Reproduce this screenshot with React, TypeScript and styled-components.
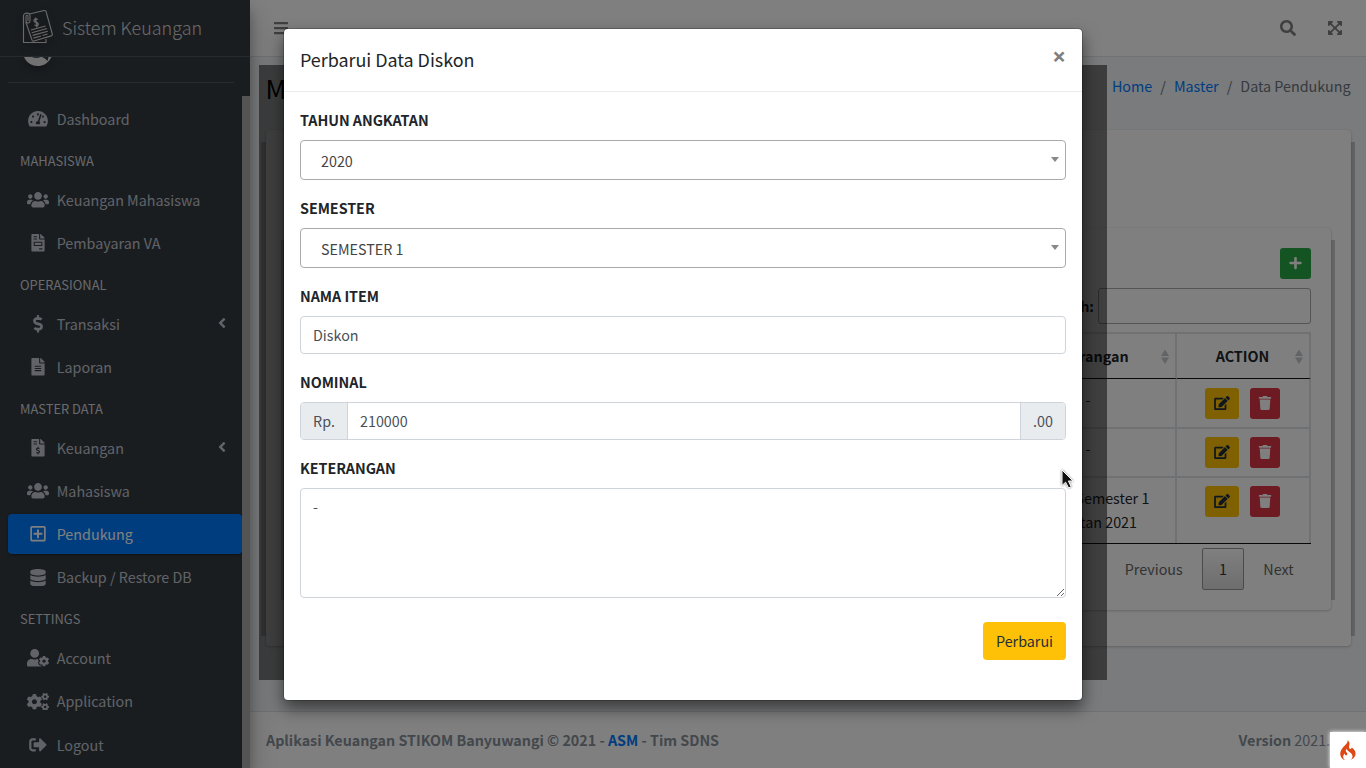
import React from "react";
import styled, { createGlobalStyle, css } from "styled-components";
import {
  FaAngleLeft,
  FaBars,
  FaCogs,
  FaDatabase,
  FaDollarSign,
  FaEdit,
  FaExpandArrowsAlt,
  FaFileAlt,
  FaFileInvoice,
  FaFileInvoiceDollar,
  FaPlus,
  FaRegPlusSquare,
  FaSearch,
  FaSignOutAlt,
  FaTachometerAlt,
  FaTrash,
  FaUserCog,
  FaUsers,
} from "react-icons/fa";
import type { IconType } from "react-icons";

/* The face is drawn larger than its nominal size, so sizes are scaled down. */
const fs = (px: number) => `${(px * 0.8955).toFixed(2)}px`;
const fontStack = `"Source Sans Pro", "Noto Sans CJK SC", "Noto Sans", sans-serif`;

const GlobalStyle = createGlobalStyle`
  *, *::before, *::after { box-sizing: border-box; }
  html, body { margin: 0; height: 100%; overflow: hidden; }
  body {
    font-family: ${fontStack};
    font-size: ${fs(16)};
    line-height: 24px;
    color: #212529;
    background: #f4f6f9;
  }
  button, input, textarea { font: inherit; margin: 0; }
`;

const Page = styled.div`
  position: relative;
  display: flex;
  width: 1366px;
  height: 768px;
  overflow: hidden;
`;

/* ---------- Sidebar ---------- */

const Sidebar = styled.aside`
  position: relative;
  z-index: 2;
  display: flex;
  flex-direction: column;
  flex: 0 0 250px;
  height: 768px;
  background: #343a40;
  box-shadow: 0 14px 28px rgba(0, 0, 0, 0.25), 0 10px 10px rgba(0, 0, 0, 0.22);
`;

const Brand = styled.div`
  display: flex;
  align-items: center;
  flex: 0 0 57px;
  padding: 0 0 3px 21px;
  border-bottom: 1px solid #4b545c;
  color: rgba(255, 255, 255, 0.8);
  font-size: ${fs(20)};
  font-weight: 300;
  svg {
    margin: 0 8px 0 0;
    opacity: 0.9;
    filter: drop-shadow(0 3px 4px rgba(0, 0, 0, 0.4));
  }
`;

const SidebarBody = styled.div`
  display: flex;
  flex: 1;
  min-height: 0;
`;

const SidebarScroll = styled.div`
  flex: 1;
  overflow: hidden;
`;

const UserPanel = styled.div`
  height: 26px;
  margin: 0 8px 16.09px;
  padding-left: 15px;
  width: 226px;
  border-bottom: 1px solid #4f5962;
  svg {
    display: block;
    filter: drop-shadow(0 3px 3px rgba(0, 0, 0, 0.3));
  }
`;

const ScrollTrack = styled.div`
  flex: 0 0 8px;
  padding-top: 39px;
`;

const ScrollThumb = styled.div`
  height: 100%;
  background: #a9a9a9;
`;

const Nav = styled.nav`
  padding-left: 8px;
`;

const NavHeader = styled.div`
  height: 37.6px;
  padding: 7.35px 12px 0;
  color: #d0d4db;
  font-size: ${fs(14.4)};
  line-height: 21.6px;
`;

const NavLink = styled.a<{ $active?: boolean }>`
  display: flex;
  align-items: center;
  height: 40px;
  margin-bottom: 3.2px;
  padding: 0 16px 0 16.8px;
  border-radius: 4px;
  color: #c2c7d0;
  ${(p) =>
    p.$active &&
    css`
      color: #fff;
      background: #007bff;
      box-shadow: 0 1px 3px rgba(0, 0, 0, 0.12), 0 1px 2px rgba(0, 0, 0, 0.24);
    `}
`;

const NavIcon = styled.span`
  display: flex;
  justify-content: center;
  width: 25.6px;
  margin-right: 6.3px;
  svg {
    width: 22px;
    height: 17.6px;
    flex-shrink: 0;
  }
`;

const NavArrow = styled(FaAngleLeft)`
  width: 8px;
  height: 16px;
  margin: -2px 0 0 auto;
`;

/* ---------- Main column ---------- */

const Main = styled.div`
  display: flex;
  flex-direction: column;
  flex: 1;
  min-width: 0;
  background: #f4f6f9;
`;

const TopBar = styled.header`
  display: flex;
  align-items: center;
  flex: 0 0 57px;
  padding: 0 24px;
  border-bottom: 1px solid #dee2e6;
  background: #fff;
  color: rgba(0, 0, 0, 0.5);
  svg {
    width: 14px;
    height: 16px;
  }
`;

const TopActions = styled.div`
  display: flex;
  gap: 32px;
  margin-left: auto;
  svg:first-child {
    width: 16px;
  }
`;

const ContentHeader = styled.div`
  display: flex;
  justify-content: space-between;
  flex: 0 0 73px;
  padding: 14px 15.5px 0 16px;
`;

const Title = styled.h1`
  margin: -1px 0 0 -0.5px;
  font-size: ${fs(28.8)};
  font-weight: 400;
  line-height: 35px;
  color: #000;
`;

const Breadcrumb = styled.div`
  display: flex;
  gap: 8px;
  margin-top: 3px;
  color: #6c757d;
  a {
    color: #007bff;
  }
`;

const edgeStrips = css`
  box-shadow: 0 0 1px rgba(0, 0, 0, 0.125), 0 1px 3px rgba(0, 0, 0, 0.2),
    15px 1px 0 -11px rgba(0, 0, 0, 0.2), -16px 1px 0 -11px rgba(0, 0, 0, 0.2);
`;

const OuterCard = styled.section`
  flex: 0 0 516px;
  margin: 0 15px 0 16px;
  padding: 98px 20px 0;
  border-radius: 4px;
  background: #fff;
  ${edgeStrips}
`;

const InnerCard = styled.section`
  display: flex;
  flex-direction: column;
  height: 382px;
  padding: 20px 20px 0;
  border-radius: 4px;
  background: #fff;
  ${edgeStrips}
`;

const ActionButton = styled.button<{ $tone: "add" | "edit" | "remove" }>`
  display: inline-flex;
  align-items: center;
  justify-content: center;
  width: ${(p) => ({ add: 31, edit: 34, remove: 30 })[p.$tone]}px;
  height: 31px;
  padding: 0 0 1px;
  border: 0;
  border-radius: 3px;
  color: ${(p) => (p.$tone === "edit" ? "#1f2d3d" : "#fff")};
  background: ${(p) => ({ add: "#28a745", edit: "#ffc107", remove: "#dc3545" })[p.$tone]};
  svg {
    width: ${(p) => (p.$tone === "add" ? 13 : 16)}px;
    height: 14px;
    flex-shrink: 0;
    margin-right: ${(p) => (p.$tone === "add" ? 1 : 0)}px;
  }
`;

const AddRow = styled.div`
  display: flex;
  justify-content: flex-end;
  height: 40px;
`;

const SearchRow = styled.label`
  display: flex;
  align-items: center;
  justify-content: flex-end;
  gap: 4px;
  height: 36px;
  margin-bottom: 8px;
  font-weight: 700;
  input {
    width: 213px;
    height: 36px;
    border: 1px solid #aaa;
    border-radius: 3px;
    background: transparent;
  }
`;

const Table = styled.div`
  display: grid;
  grid-template-columns: 1fr 175px 134px;
  grid-template-rows: 45px 50px 49px 65px;
  border-top: 2px solid #dee2e6;
  border-bottom: 1px solid #111;
  height: 212px;
`;

const HeadCell = styled.div`
  display: flex;
  align-items: center;
  justify-content: center;
  position: relative;
  border-right: 2px solid #dee2e6;
  border-bottom: 1px solid #111;
  padding: 0 1px 1px 0;
  font-weight: 700;
  svg {
    position: absolute;
    right: 6px;
    top: 15px;
  }
`;

const Cell = styled.div<{ $row: number }>`
  display: flex;
  gap: 11px;
  justify-content: center;
  padding: ${(p) => (p.$row === 0 ? 9 : 8)}px 1px 0 0;
  border-right: 2px solid #dee2e6;
  border-bottom: ${(p) => (p.$row === 2 ? "0" : "2px")} solid #dee2e6;
  text-align: center;
  white-space: nowrap;
`;

const Pager = styled.div`
  display: flex;
  align-items: center;
  justify-content: flex-end;
  gap: 19.3px;
  height: 42px;
  margin-top: 4px;
  padding-right: 17.3px;
  color: #666;
  b {
    display: flex;
    align-items: center;
    justify-content: center;
    width: 42px;
    height: 42px;
    border: 1px solid #979797;
    border-radius: 2px;
    color: #333;
    font-weight: 400;
    background: linear-gradient(#fff, #dcdcdc);
  }
`;

const Footer = styled.footer`
  display: flex;
  justify-content: space-between;
  flex: 0 0 57px;
  margin-top: auto;
  padding: 16px 15.5px 0 16px;
  border-top: 1px solid #dee2e6;
  background: #fff;
  color: #869099;
  strong {
    letter-spacing: -0.02px;
  }
  a {
    color: #007bff;
  }
`;

const Version = styled.span`
  width: 112px;
  white-space: nowrap;
`;

/* ---------- Overlays ---------- */

const Shade = styled.div`
  position: absolute;
  inset: 0;
  z-index: 3;
  background: rgba(0, 0, 0, 0.5);
`;

const LoadingShade = styled.div`
  position: absolute;
  z-index: 4;
  left: 259px;
  top: 65px;
  width: 848px;
  height: 615px;
  background: rgba(0, 0, 0, 0.5);
`;

const Modal = styled.div`
  position: absolute;
  z-index: 5;
  left: 283px;
  top: 28px;
  width: 800px;
  height: 673px;
  border: 1px solid rgba(0, 0, 0, 0.2);
  border-radius: 5px;
  background: #fff;
  background-clip: padding-box;
  box-shadow: 0 8px 16px rgba(0, 0, 0, 0.5);
`;

const ModalHeader = styled.div`
  display: flex;
  justify-content: space-between;
  height: 63px;
  padding: 15px 16px 0;
  border-bottom: 1px solid #e9ecef;
  font-size: ${fs(20)};
  letter-spacing: -0.02px;
  line-height: 30px;
`;

const Close = styled.span`
  font-family: "Open Sans", "Noto Sans", sans-serif;
  font-size: 24px;
  font-weight: 700;
  line-height: 23px;
  color: #7f7f7f;
`;

const ModalBody = styled.form`
  display: flex;
  flex-direction: column;
  padding: 16px;
`;

const Field = styled.label`
  display: flex;
  flex-direction: column;
  gap: 8px;
  margin-bottom: 16px;
  font-weight: 700;
  letter-spacing: -0.04px;
  > * {
    font-weight: 400;
    letter-spacing: 0;
  }
`;

const SelectBox = styled.span`
  display: flex;
  align-items: center;
  justify-content: space-between;
  height: 40px;
  padding: 1px 6px 0 20px;
  border: 1px solid #aaa;
  border-radius: 4px;
  color: #444;
  &::after {
    content: "";
    margin-top: -3px;
    border: 4px solid transparent;
    border-top: 5px solid #888;
    border-bottom: 0;
  }
`;

const control = css`
  border: 1px solid #ced4da;
  border-radius: 4px;
  color: #495057;
  background: #fff;
  outline: none;
`;

const TextInput = styled.input`
  ${control}
  height: 38px;
  padding: 5px 12px 7px;
`;

const InputGroup = styled.span`
  ${control}
  display: flex;
  height: 38px;
  overflow: hidden;
  input {
    flex: 1;
    min-width: 0;
    padding: 0 12px;
    border: 0;
    outline: none;
    color: #495057;
  }
`;

const Addon = styled.span<{ $side: "left" | "right" }>`
  display: flex;
  align-items: center;
  justify-content: center;
  width: ${(p) => (p.$side === "left" ? 47 : 45)}px;
  border-${(p) => (p.$side === "left" ? "right" : "left")}: 1px solid #ced4da;
  background: #e9ecef;
`;

const TextArea = styled.textarea`
  ${control}
  height: 110px;
  padding: 6px 12px;
`;

const Submit = styled.button`
  align-self: flex-end;
  width: 83px;
  height: 38px;
  margin-top: 8px;
  padding: 0;
  border: 0;
  border-radius: 4px;
  background: #ffc107;
  color: #1f2d3d;
`;

const Pointer = styled.svg`
  position: absolute;
  z-index: 6;
  left: 1061px;
  top: 468px;
  filter: drop-shadow(0 0 1px rgba(0, 0, 0, 0.5));
`;

const DebugBadge = styled.div`
  position: absolute;
  z-index: 7;
  right: 0;
  bottom: 0;
  display: flex;
  align-items: center;
  justify-content: center;
  width: 36px;
  height: 36px;
  background: #fff;
  box-shadow: 0 0 4px #fff;
`;

/* ---------- Drawings ---------- */

const BrandLogo = () => (
  <svg width="33" height="35" viewBox="0 0 33 35" fill="none" stroke="#e4e4e4" strokeWidth="1.1">
    <path d="M2.5 8V33.5H25V30" />
    <path d="M8.5 5L23 1.5C24 1.3 24.7 1.5 25 2.4L31.3 25C31.6 26 31.2 26.6 30.2 26.9L13 32C12 32.3 11.2 32 11 31L4.8 13" />
    <path d="M2.5 13V7C2.5 3.2 9 3.2 9 7V11.5C9 15 5 14.8 5 11.5V7.5C5 5.9 7 5.9 7 7.5V12" />
    <path d="M16.5 10.7C15.7 9.3 12.6 10 13 12C13.5 13.9 17 12.7 17.3 14.8C17.6 16.9 14.6 17.4 13.7 15.8M14.3 8.6L16.1 18.4" strokeWidth="1.3" />
    <path d="M10 21L24.5 17M10.8 23.7L26 19.5M11.6 26.4L26.8 22.2M12.4 29.1L20 27M21.5 26.5L26.5 25" />
  </svg>
);

const AvatarEdge = () => (
  <svg width="30" height="13" viewBox="0 0 30 13">
    <path d="M1 0C6 11.5 22 12 27.5 1.5L28.5 0L25.5 0L24.5 4L22 1.5L19 0Z" fill="#e3e3e3" />
    <path d="M9 0Q13 2.2 18 0Z" fill="#444" />
  </svg>
);

const SortMark = () => (
  <svg width="8" height="16" viewBox="0 0 8 16" fill="#c4c6c9">
    <path d="M0 7L4 0.5L8 7ZM0 8.5L4 15L8 8.5Z" />
  </svg>
);

const Flame = () => (
  <svg width="16" height="20" viewBox="0 0 155 200" fill="#dd4814">
    <path d="M73.7 3.7c2.2 7.9-.7 18.5-7.8 29-1.8 2.6-10.7 12.2-19.7 21.3-23.9 24-33.6 37.1-40.3 54.4-7.9 20.6-7.8 40.8.5 58.2C12.8 180 27.6 193 42.5 198l6 2-3-2.2c-21-15.2-22.9-38.7-4.8-58.8 2.5-2.7 4.8-5 5.1-5 .4 0 .7 2.7.7 6.1 0 5.7.2 6.2 3.7 9.5 3 2.7 4.6 3.4 7.8 3.4 5.6 0 9.9-2.4 11.6-6.5 2.9-6.9 1.6-12-5-20.5-10.5-13.4-11.7-23.3-4.3-34.7l3.1-4.8.7 4.7c1.3 8.2 5.8 12.9 25 25.8 20.9 14.1 30.6 26.1 32.8 40.5 1.1 7.2-.1 16.1-3.1 21.8-2.7 5.3-11.2 14.3-16.5 17.4-2.4 1.4-4.3 2.6-4.3 2.8 0 .2 2.4-.4 5.3-1.4 24.1-8.3 42.7-27.1 48.2-48.6 1.9-7.6 1.9-20.2-.1-28.5-3.5-15.2-14.6-30.5-29.9-41.2l-7-4.9-.6 3.3c-.8 4.8-2.6 7.6-5.9 9.3-4.5 2.3-10.3 1.9-13.8-1-6.7-5.7-7.8-14.6-3.7-30.5 3-11.6 3.2-20.6.5-29.1C88.3 18 80.6 6.3 74.8 2.2 73.1.9 73 1 73.7 3.7z" />
  </svg>
);

/* ---------- Data ---------- */

type Item = { label: string; icon: IconType; active?: boolean; arrow?: boolean };
const menu: { header?: string; items: Item[] }[] = [
  { items: [{ label: "Dashboard", icon: FaTachometerAlt }] },
  {
    header: "MAHASISWA",
    items: [
      { label: "Keuangan Mahasiswa", icon: FaUsers },
      { label: "Pembayaran VA", icon: FaFileInvoice },
    ],
  },
  {
    header: "OPERASIONAL",
    items: [
      { label: "Transaksi", icon: FaDollarSign, arrow: true },
      { label: "Laporan", icon: FaFileAlt },
    ],
  },
  {
    header: "MASTER DATA",
    items: [
      { label: "Keuangan", icon: FaFileInvoiceDollar, arrow: true },
      { label: "Mahasiswa", icon: FaUsers },
      { label: "Pendukung", icon: FaRegPlusSquare, active: true },
      { label: "Backup / Restore DB", icon: FaDatabase },
    ],
  },
  {
    header: "SETTINGS",
    items: [
      { label: "Account", icon: FaUserCog },
      { label: "Application", icon: FaCogs },
      { label: "Logout", icon: FaSignOutAlt },
    ],
  },
];

const notes: string[][] = [["-"], ["-"], ["Diskon Semester 1", "Angkatan 2021"]];

export default function App() {
  return (
    <>
      <GlobalStyle />
      <Page>
        <Sidebar>
          <Brand>
            <BrandLogo />
            Sistem Keuangan
          </Brand>
          <SidebarBody>
            <SidebarScroll>
              <UserPanel>
                <AvatarEdge />
              </UserPanel>
              <Nav>
                {menu.map((group, g) => (
                  <React.Fragment key={g}>
                    {group.header && <NavHeader>{group.header}</NavHeader>}
                    {group.items.map(({ label, icon: Icon, active, arrow }) => (
                      <NavLink key={label} $active={active}>
                        <NavIcon>
                          <Icon />
                        </NavIcon>
                        {label}
                        {arrow && <NavArrow />}
                      </NavLink>
                    ))}
                  </React.Fragment>
                ))}
              </Nav>
            </SidebarScroll>
            <ScrollTrack>
              <ScrollThumb />
            </ScrollTrack>
          </SidebarBody>
        </Sidebar>

        <Main>
          <TopBar>
            <FaBars />
            <TopActions>
              <FaSearch />
              <FaExpandArrowsAlt />
            </TopActions>
          </TopBar>
          <ContentHeader>
            <Title>M</Title>
            <Breadcrumb>
              <a>Home</a>
              <span>/</span>
              <a>Master</a>
              <span>/</span>
              <span>Data Pendukung</span>
            </Breadcrumb>
          </ContentHeader>
          <OuterCard>
            <InnerCard>
              <AddRow>
                <ActionButton $tone="add">
                  <FaPlus />
                </ActionButton>
              </AddRow>
              <SearchRow>
                Search:
                <input />
              </SearchRow>
              <Table>
                <HeadCell />
                <HeadCell>
                  Keterangan
                  <SortMark />
                </HeadCell>
                <HeadCell>
                  ACTION
                  <SortMark />
                </HeadCell>
                {notes.map((lines, i) => (
                  <React.Fragment key={i}>
                    <Cell $row={i} />
                    <Cell $row={i}>
                      <span>
                        {lines.map((line) => (
                          <div key={line}>{line}</div>
                        ))}
                      </span>
                    </Cell>
                    <Cell $row={i}>
                      <ActionButton $tone="edit">
                        <FaEdit />
                      </ActionButton>
                      <ActionButton $tone="remove">
                        <FaTrash />
                      </ActionButton>
                    </Cell>
                  </React.Fragment>
                ))}
              </Table>
              <Pager>
                <span>Previous</span>
                <b>1</b>
                <span>Next</span>
              </Pager>
            </InnerCard>
          </OuterCard>
          <Footer>
            <strong>
              Aplikasi Keuangan STIKOM Banyuwangi © 2021 - <a>ASM</a> - Tim SDNS
            </strong>
            <Version>
              <b>Version</b> 2021.
            </Version>
          </Footer>
        </Main>

        <Shade />
        <LoadingShade />
        <Modal>
          <ModalHeader>
            Perbarui Data Diskon
            <Close>×</Close>
          </ModalHeader>
          <ModalBody>
            <Field>
              TAHUN ANGKATAN
              <SelectBox>2020</SelectBox>
            </Field>
            <Field>
              SEMESTER
              <SelectBox>SEMESTER 1</SelectBox>
            </Field>
            <Field>
              NAMA ITEM
              <TextInput defaultValue="Diskon" />
            </Field>
            <Field>
              NOMINAL
              <InputGroup>
                <Addon $side="left">Rp.</Addon>
                <input defaultValue="210000" />
                <Addon $side="right">.00</Addon>
              </InputGroup>
            </Field>
            <Field>
              KETERANGAN
              <TextArea defaultValue="-" />
            </Field>
            <Submit type="button">Perbarui</Submit>
          </ModalBody>
        </Modal>

        <Pointer width="14" height="22" viewBox="0 0 14 22">
          <path
            d="M1 2V17.5L4.6 14.2L7.6 20L10.2 18.8L7.4 13H12Z"
            fill="#111"
            stroke="#fff"
            strokeWidth="1"
          />
        </Pointer>
        <DebugBadge>
          <Flame />
        </DebugBadge>
      </Page>
    </>
  );
}
